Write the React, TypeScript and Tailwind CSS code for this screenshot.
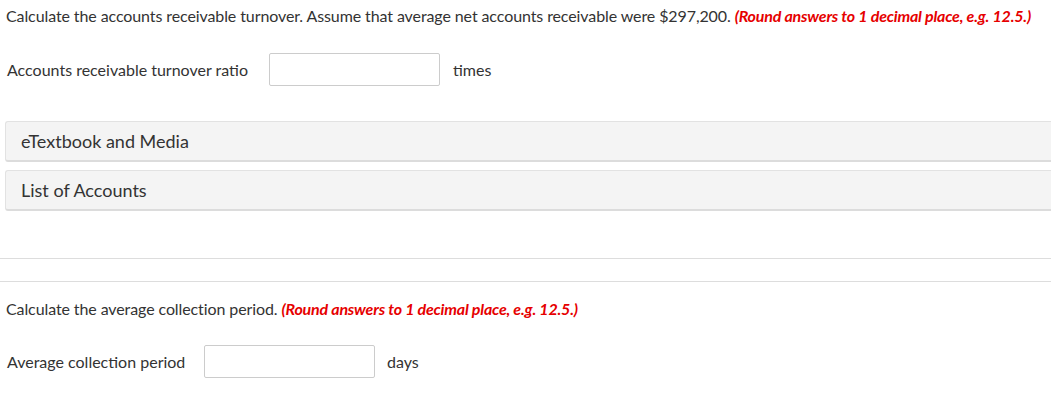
export default function App() {
  return (
    <div className="w-[1051px] h-[398px] overflow-hidden bg-white text-[#333] font-['Lato','Liberation_Sans',sans-serif]">
      {/* Question 1 */}
      <p className="pl-[6px] pt-[6px] text-[16px] leading-[20px] tracking-[-0.1px] whitespace-nowrap">
        Calculate the accounts receivable turnover. Assume that average net accounts receivable were $297,200.{' '}
        <span className="font-bold italic text-[#e60000] tracking-[-0.2px]">(Round answers to 1 decimal place, e.g. 12.5.)</span>
      </p>

      <div className="mt-[27px] flex items-center pl-[7px] text-[16px]">
        <span className="w-[262px]">Accounts receivable turnover ratio</span>
        <input className="w-[171px] h-[33px] border border-[#ccc] rounded-[2px] outline-none" />
        <span className="ml-[13px]">times</span>
      </div>

      {/* Resource panels */}
      <div className="mt-[35px] ml-[5px] flex flex-col gap-[8px]">
        <div className="h-[41px] flex items-center pl-[15px] bg-[#f4f4f4] border border-r-0 border-[#e2e2e2] border-b-2 border-b-[#dcdcdc] rounded-l-[3px] text-[18px]">
          eTextbook and Media
        </div>
        <div className="h-[41px] flex items-center pl-[15px] bg-[#f4f4f4] border border-r-0 border-[#e2e2e2] border-b-2 border-b-[#dcdcdc] rounded-l-[3px] text-[18px]">
          List of Accounts
        </div>
      </div>

      <div className="mt-[47px] border-t border-[#dddddd]" />
      <div className="mt-[22px] border-t border-[#dddddd]" />

      {/* Question 2 */}
      <p className="pl-[6px] mt-[17px] text-[16px] leading-[20px] tracking-[-0.1px]">
        Calculate the average collection period.{' '}
        <span className="font-bold italic text-[#e60000] tracking-[-0.2px]">(Round answers to 1 decimal place, e.g. 12.5.)</span>
      </p>

      <div className="mt-[26px] flex items-center pl-[7px] text-[16px]">
        <span className="w-[197px]">Average collection period</span>
        <input className="w-[171px] h-[33px] border border-[#ccc] rounded-[2px] outline-none" />
        <span className="ml-[12px]">days</span>
      </div>
    </div>
  )
}
